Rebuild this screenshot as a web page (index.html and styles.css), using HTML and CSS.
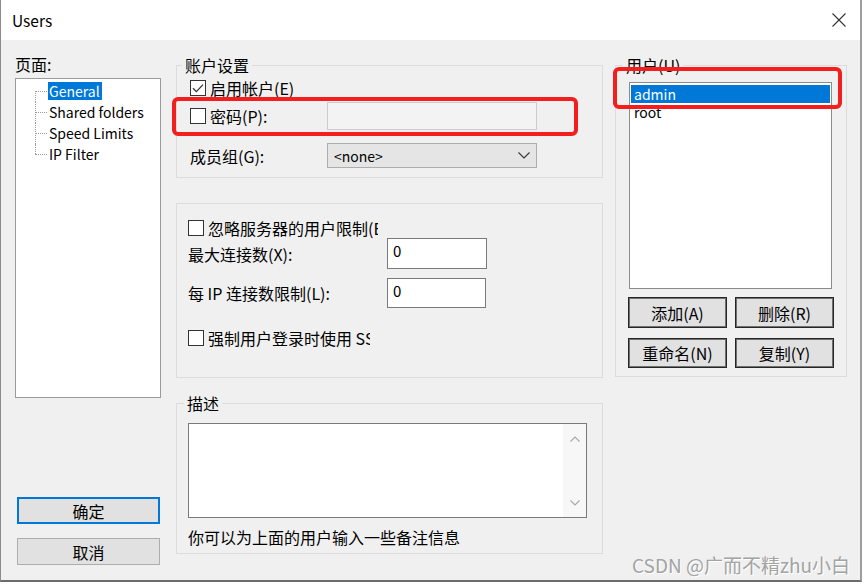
FILE: index.html
```html
<!DOCTYPE html>
<html lang="zh-CN">
<head>
  <meta charset="UTF-8" />
  <title>Users</title>
  <link rel="stylesheet" href="styles.css">
</head>
<body>

  <div class="window">

    <!-- TITLE BAR -->
    <div class="titlebar">
      <span class="title">Users</span>
      <svg class="close" width="14" height="14" viewBox="0 0 14 14">
        <path d="M0.5 0.5L13.5 13.5M13.5 0.5L0.5 13.5" stroke="#333" stroke-width="1.1" fill="none"/>
      </svg>
    </div>

    <div class="content">

      <!-- PAGES -->
      <div class="col-left">
        <div class="caption">页面:</div>
        <div class="tree">
          <ul>
            <li><span class="sel">General</span></li>
            <li><span>Shared folders</span></li>
            <li><span>Speed Limits</span></li>
            <li><span>IP Filter</span></li>
          </ul>
        </div>
        <button class="btn btn-ok">确定</button>
        <button class="btn btn-cancel">取消</button>
      </div>

      <!-- SETTINGS -->
      <div class="col-mid">
        <fieldset class="group account">
          <legend>账户设置</legend>
          <div class="row acc-enable">
            <span class="check">
              <svg width="14" height="14" viewBox="0 0 14 14"><path d="M2 7.2L5.4 10.6L12 3.6" stroke="#333" stroke-width="1.3" fill="none"/></svg>
            </span>
            <span>启用帐户(E)</span>
          </div>
          <div class="row acc-pass">
            <span class="label"><span class="check"></span>密码(P):</span>
            <div class="field disabled"></div>
          </div>
          <div class="row acc-group">
            <span class="label">成员组(G):</span>
            <div class="select">
              <span>&lt;none&gt;</span>
              <svg width="12" height="7" viewBox="0 0 12 7"><path d="M0.5 0.5L6 6L11.5 0.5" stroke="#333" stroke-width="1.1" fill="none"/></svg>
            </div>
          </div>
        </fieldset>

        <div class="group limits">
          <div class="row lim-ignore">
            <span class="check"></span>
            <span class="clip clip-ignore">忽略服务器的用户限制(B)</span>
          </div>
          <div class="row lim-max">
            <span class="label">最大连接数(X):</span>
            <input class="field num" type="text" value="0">
          </div>
          <div class="row lim-ip">
            <span class="label">每 IP 连接数限制(L):</span>
            <input class="field num" type="text" value="0">
          </div>
          <div class="row lim-ssl">
            <span class="check"></span>
            <span class="clip clip-ssl">强制用户登录时使用 SSL</span>
          </div>
        </div>

        <fieldset class="group desc">
          <legend>描述</legend>
          <div class="memo">
            <div class="memo-text"></div>
            <div class="vscroll">
              <svg width="10" height="6" viewBox="0 0 10 6"><path d="M0.5 5.5L5 1L9.5 5.5" stroke="#a6a6a6" stroke-width="1.1" fill="none"/></svg>
              <svg width="10" height="6" viewBox="0 0 10 6"><path d="M0.5 0.5L5 5L9.5 0.5" stroke="#a6a6a6" stroke-width="1.1" fill="none"/></svg>
            </div>
          </div>
          <div class="hint">你可以为上面的用户输入一些备注信息</div>
        </fieldset>
      </div>

      <!-- USERS -->
      <div class="col-right">
        <fieldset class="group users">
          <legend>用户(U)</legend>
          <div class="listbox">
            <div class="item sel">admin</div>
            <div class="item">root</div>
          </div>
          <div class="btn-row">
            <button class="btn btn-sm">添加(A)</button>
            <button class="btn btn-sm">删除(R)</button>
          </div>
          <div class="btn-row second">
            <button class="btn btn-sm">重命名(N)</button>
            <button class="btn btn-sm">复制(Y)</button>
          </div>
        </fieldset>
      </div>

    </div>

    <!-- annotations over the screenshot -->
    <div class="mark mark-pass"></div>
    <div class="mark mark-user"></div>
    <div class="watermark">CSDN @广而不精zhu小白</div>
  </div>

</body>
</html>
```

FILE: styles.css
```css
* {
  box-sizing: border-box;
}

body {
  margin: 0;
  background: #fff;
  font-family: "Noto Sans CJK SC", "Noto Sans", sans-serif;
  font-size: 16px;
  color: #000;
}

.window {
  position: relative;
  width: 862px;
  height: 582px;
  border-left: 1px solid #8c8c8c;
  border-right: 2px solid #9d9d9d;
  border-bottom: 2px solid #6c6c6c;
  background: #f0f0f0;
}

/* TITLE BAR */
.titlebar {
  height: 40px;
  background: #fff;
  display: flex;
  align-items: center;
  justify-content: space-between;
  padding: 0 14px 0 11px;
}

.title {
  font-size: 15.5px;
  line-height: 20px;
}

/* LAYOUT */
.content {
  display: flex;
  align-items: flex-start;
  height: 540px;
  padding-left: 14px;
}

.col-left {
  width: 146px;
  margin-right: 15px;
  padding-top: 14px;
  display: flex;
  flex-direction: column;
}

.col-mid {
  width: 427px;
  margin-right: 12px;
  padding-top: 15px;
}

.col-right {
  width: 232px;
  padding-top: 15px;
}

/* LEFT: PAGE TREE */
.caption {
  line-height: 20px;
  margin-bottom: 4px;
}

.tree {
  height: 320px;
  background: #fff;
  border: 1px solid #9b9b9b;
}

.tree ul {
  list-style: none;
  margin: 0;
  padding: 2px 0 0 19px;
}

.tree li {
  position: relative;
  height: 21px;
  font-size: 14px;
  line-height: 18px;
  padding: 1px 0 0 13px;
}

.tree li span {
  display: inline-block;
  padding: 0 2px 0 1px;
}

.tree li span.sel {
  background: #0078d7;
  color: #fff;
}

.tree li::before {
  content: "";
  position: absolute;
  left: 0;
  top: 10px;
  width: 12px;
  border-top: 1px dotted #9a9a9a;
}

.tree li::after {
  content: "";
  position: absolute;
  left: 0;
  top: 0;
  bottom: 0;
  border-left: 1px dotted #9a9a9a;
}

.tree li:first-child::after {
  top: 10px;
}

.tree li:last-child::after {
  bottom: 11px;
}

/* BUTTONS */
.btn {
  font: inherit;
  color: #000;
  background: #e1e1e1;
  border: 1px solid #adadad;
  padding: 0;
  line-height: 20px;
}

.btn-ok {
  width: 143px;
  height: 27px;
  margin: 99px 0 0 2px;
  border: 2px solid #0078d7;
}

.btn-cancel {
  width: 143px;
  height: 27px;
  margin: 14px 0 0 2px;
}

.btn-sm {
  width: 99px;
  height: 31px;
  border: 1px solid #262626;
  box-shadow: inset 0 0 0 1px #707070;
}

/* GROUP BOXES */
.group {
  margin: 0;
  min-width: 0;
  border: 1px solid #dcdcdc;
}

.group legend {
  padding: 0 3px;
  line-height: 20px;
}

.row {
  display: flex;
  align-items: center;
  white-space: nowrap;
}

.label {
  display: flex;
  align-items: center;
}

.check {
  display: inline-flex;
  align-items: center;
  justify-content: center;
  width: 16px;
  height: 16px;
  margin-right: 4px;
  background: #fff;
  border: 1px solid #333;
  flex: none;
}

.field {
  background: #fff;
  border: 1px solid #7a7a7a;
}

.field.disabled {
  width: 210px;
  height: 28px;
  background: #f3f3f3;
  border-color: #cccccc;
}

/* account settings */
.account {
  padding: 0 12px 9px 13px;
}

.account legend {
  margin-left: -8px;
}

.acc-enable {
  height: 26px;
}

.acc-pass {
  height: 28px;
  margin-top: 1px;
}

.acc-group {
  height: 25px;
  margin-top: 13px;
}

.acc-pass .label,
.acc-group .label {
  width: 137px;
}

.select {
  width: 210px;
  height: 25px;
  display: flex;
  align-items: center;
  justify-content: space-between;
  padding: 0 6px 0 6px;
  font-size: 14px;
  background: #e5e5e5;
  border: 1px solid #adadad;
}

/* connection limits */
.limits {
  margin-top: 25px;
  padding: 13px 0 27px 11px;
}

.lim-ignore {
  height: 21px;
}

.lim-max {
  height: 31px;
}

.lim-ip {
  height: 30px;
  margin-top: 9px;
}

.lim-ssl {
  height: 24px;
  margin-top: 18px;
}

.lim-max .label,
.lim-ip .label {
  width: 199px;
}

.clip {
  overflow: hidden;
}

.clip-ignore {
  width: 170px;
}

.clip-ssl {
  width: 162px;
}

.num {
  width: 100px;
  height: 31px;
  padding: 0 0 6px 5px;
  font: inherit;
  font-size: 15px;
  line-height: 20px;
  outline: none;
}

.lim-ip .num {
  width: 99px;
  height: 30px;
}

/* description */
.desc {
  margin-top: 15px;
  padding: 10px 0 6px 11px;
}

.desc legend {
  margin-left: -4px;
}

.memo {
  display: flex;
  width: 399px;
  height: 95px;
  background: #fff;
  border: 1px solid #7a7a7a;
}

.memo-text {
  flex: 1;
}

.vscroll {
  width: 23px;
  display: flex;
  flex-direction: column;
  align-items: center;
  justify-content: space-between;
  padding: 12px 0 11px;
  background: #f7f7f7;
}

.hint {
  margin-top: 9px;
  line-height: 20px;
}

/* users */
.users {
  padding: 7px 0 8px 13px;
}

.users legend {
  margin-left: -6px;
}

.listbox {
  width: 203px;
  height: 207px;
  padding: 1px;
  background: #fff;
  border: 1px solid #8c8c8c;
}

.listbox .item {
  font-size: 14px;
  line-height: 18px;
  padding-left: 3px;
}

.listbox .item.sel {
  margin-top: 1px;
  background: #0078d7;
  color: #fff;
}

.btn-row {
  display: flex;
  gap: 8px;
  margin-top: 8px;
  margin-left: -1px;
}

.btn-row.second {
  margin-top: 10px;
}

.btn-row.second .btn-sm {
  height: 30px;
}

/* ANNOTATIONS */
.mark {
  position: absolute;
  border: 4px solid #f31f1f;
  border-radius: 6px;
}

.mark-pass {
  left: 171px;
  top: 97px;
  width: 406px;
  height: 39px;
}

.mark-user {
  left: 612px;
  top: 67px;
  width: 229px;
  height: 42px;
}

.watermark {
  position: absolute;
  left: 631px;
  top: 552px;
  font-size: 19px;
  line-height: 26px;
  color: #a3a3a3;
  text-shadow: 1px 1px 0 #fff;
}
```
